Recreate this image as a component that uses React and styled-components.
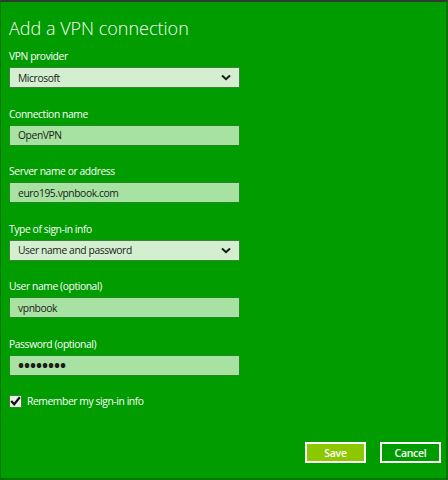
import React from "react"
import styled, { createGlobalStyle } from "styled-components"

const GlobalStyle = createGlobalStyle`
  html, body {
    margin: 0;
    padding: 0;
    background: #008a00;
  }
  * {
    box-sizing: border-box;
  }
`

const Panel = styled.div`
  width: 448px;
  height: 480px;
  background: #009c00;
  border-top: 2px solid #2e3b2e;
  border-left: 1px solid #007800;
  border-right: 2px solid #007800;
  border-bottom: 2px solid #007800;
  padding: 14px 0 0 8px;
  display: flex;
  flex-direction: column;
  font-family: "Open Sans", "Noto Sans", sans-serif;
  color: #ffffff;
`

const Title = styled.h1`
  margin: 0 0 9px;
  font-size: 18px;
  font-weight: 300;
  line-height: 24px;
`

const Field = styled.div`
  display: flex;
  flex-direction: column;
  gap: 4px;
  margin-bottom: 18.5px;
`

const Label = styled.label`
  font-size: 10.3px;
  letter-spacing: -0.4px;
  line-height: 14px;
`

const Box = styled.div`
  width: 231px;
  height: 21px;
  border: 1px solid ${(p) => (p.$select ? "#3d7f3d" : "#1f8a1f")};
  background: ${(p) => (p.$select ? "#d3efd0" : "#a8e2a2")};
  color: #1a1a1a;
  display: flex;
  align-items: center;
  justify-content: space-between;
  padding: 0 8px;
  font-size: 10.3px;
  letter-spacing: -0.4px;
  overflow: hidden;
`

const Dots = styled.span`
  font-size: 16px;
  line-height: 16px;
  letter-spacing: 0;
  font-weight: 700;
`

const Chevron = () => (
  <svg width="10" height="7" viewBox="0 0 10 7">
    <path d="M1 1.5 L5 5.2 L9 1.5" fill="none" stroke="#1a1a1a" strokeWidth="2" />
  </svg>
)

const CheckRow = styled.div`
  display: flex;
  align-items: center;
  gap: 5px;
  font-size: 10.3px;
  letter-spacing: -0.4px;
`

const CheckBox = styled.span`
  width: 13px;
  height: 13px;
  background: #e4f3e2;
  border: 1px solid #3d7f3d;
  display: flex;
  align-items: center;
  justify-content: center;
`

const Footer = styled.div`
  margin-top: auto;
  display: flex;
  justify-content: flex-end;
  gap: 14px;
  padding: 0 5px 15px 0;
`

const Button = styled.button`
  width: 61px;
  height: 21px;
  border: 2px solid #ffffff;
  background: ${(p) => (p.$primary ? "#8cc800" : "transparent")};
  color: #ffffff;
  font-family: "Open Sans", "Noto Sans", sans-serif;
  font-size: 10.5px;
  font-weight: 600;
  letter-spacing: -0.3px;
  padding: 0;
`

const fields = [
  { label: "VPN provider", value: "Microsoft", select: true },
  { label: "Connection name", value: "OpenVPN" },
  { label: "Server name or address", value: "euro195.vpnbook.com" },
  { label: "Type of sign-in info", value: "User name and password", select: true },
  { label: "User name (optional)", value: "vpnbook" },
  { label: "Password (optional)", value: "••••••••", password: true },
]

export default function App() {
  return (
    <>
      <GlobalStyle />
      <Panel>
        <Title>Add a VPN connection</Title>
        {fields.map((f) => (
          <Field key={f.label}>
            <Label>{f.label}</Label>
            <Box $select={f.select}>
              {f.password ? <Dots>{f.value}</Dots> : <span>{f.value}</span>}
              {f.select && <Chevron />}
            </Box>
          </Field>
        ))}
        <CheckRow>
          <CheckBox>
            <svg width="11" height="10" viewBox="0 0 11 10">
              <path d="M1.2 5 L4.2 8.2 L9.8 1.2" fill="none" stroke="#111" strokeWidth="2.2" />
            </svg>
          </CheckBox>
          Remember my sign-in info
        </CheckRow>
        <Footer>
          <Button $primary>Save</Button>
          <Button>Cancel</Button>
        </Footer>
      </Panel>
    </>
  )
}
